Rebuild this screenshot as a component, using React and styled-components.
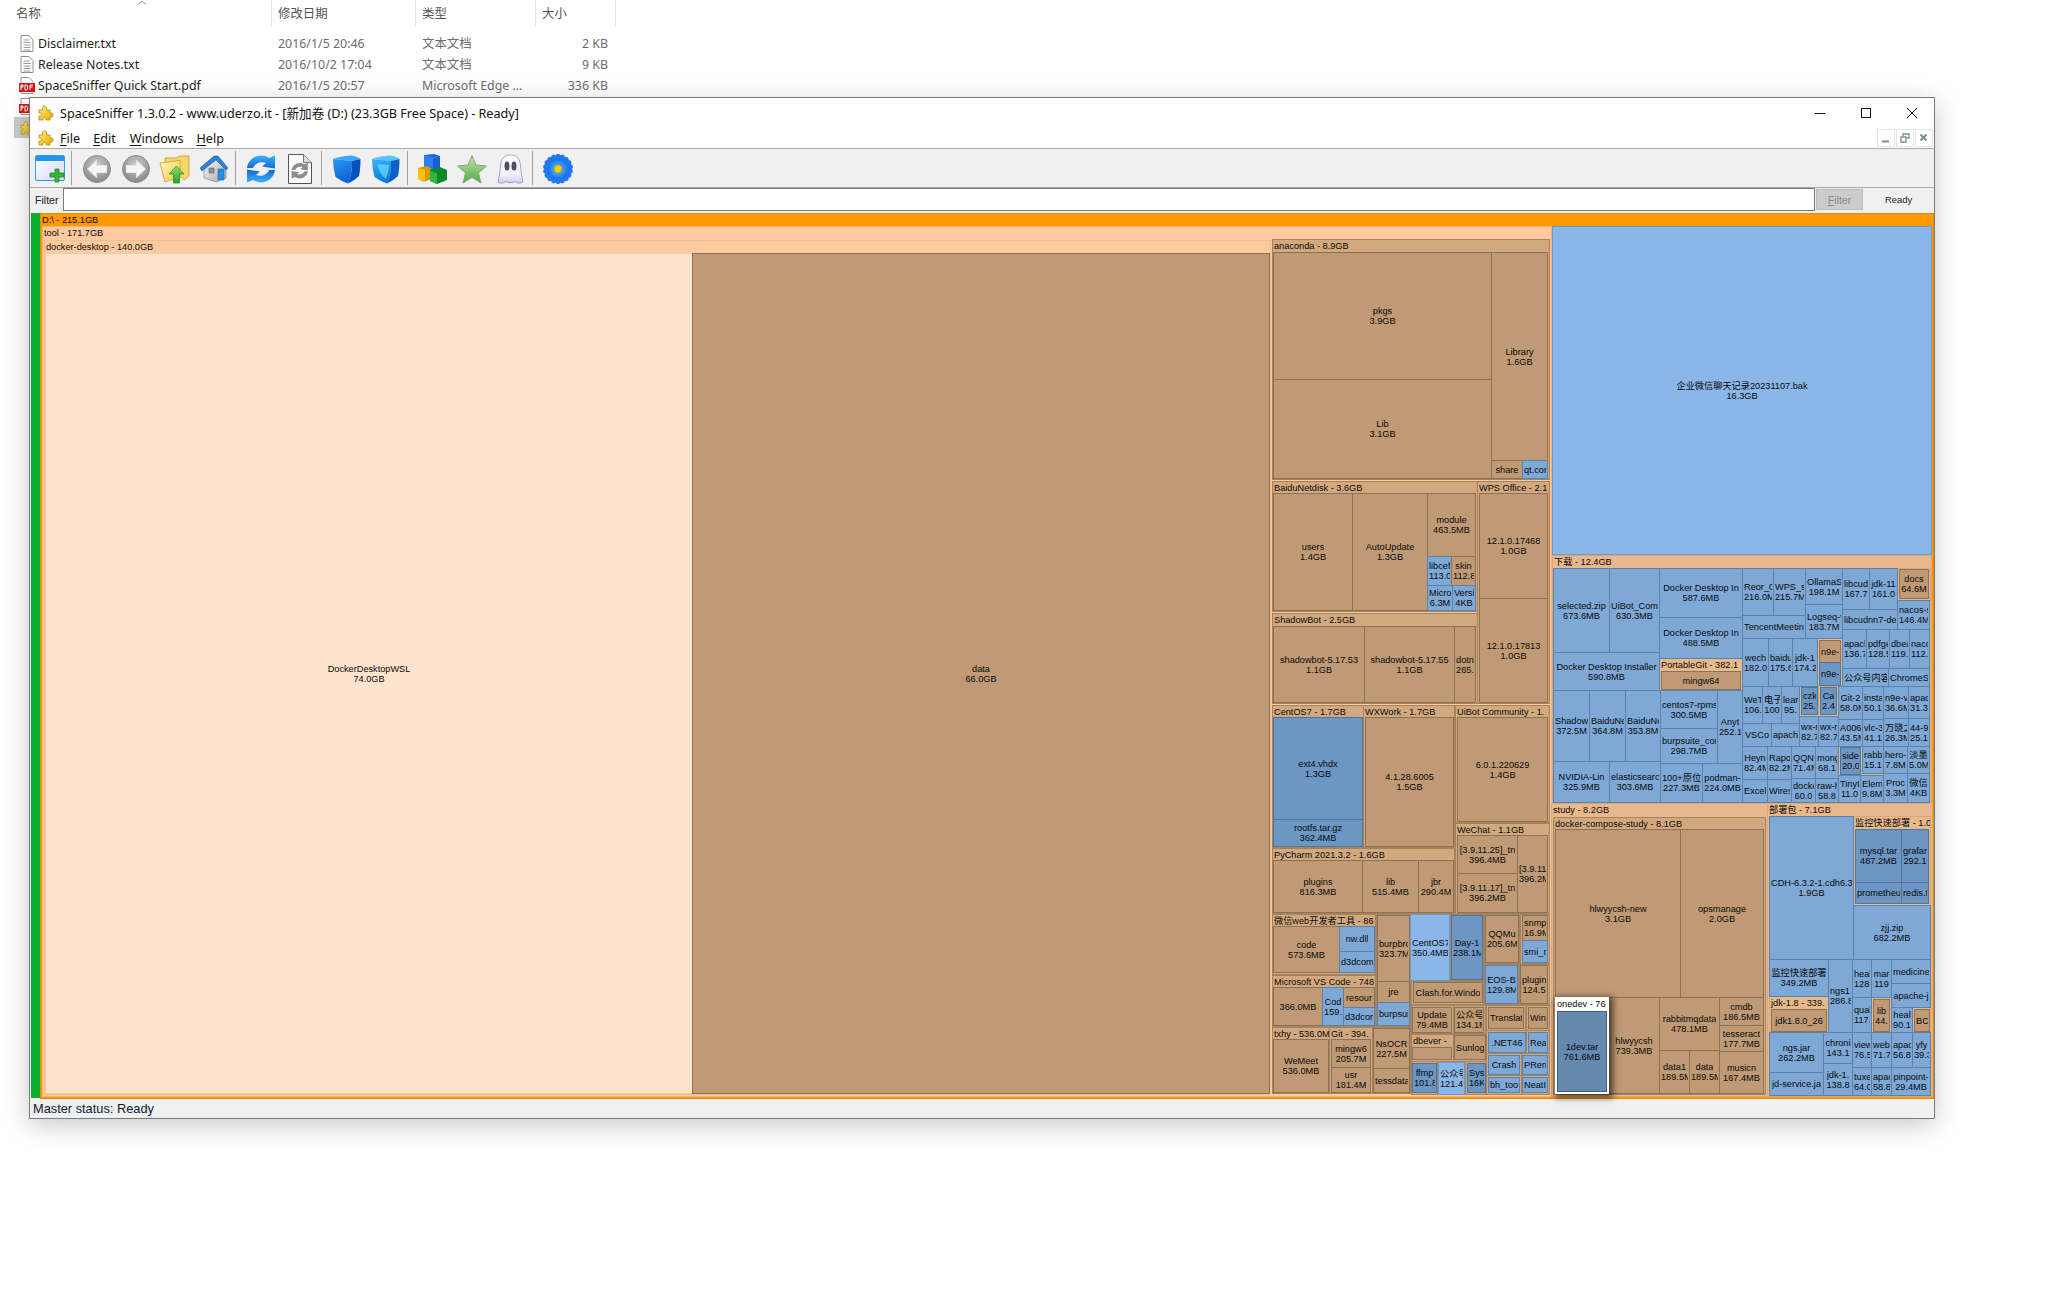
import React from 'react';
import styled, { createGlobalStyle } from 'styled-components';

const GlobalStyle = createGlobalStyle`
  html, body {
    margin: 0;
    background: #fff;
    font-family: "Liberation Sans", "Noto Sans CJK SC", sans-serif;
  }
  #root {
    position: relative;
    width: 2070px;
    height: 1292px;
    overflow: hidden;
  }
`;

const UI_FONT = `"Noto Sans", "Noto Sans CJK SC", sans-serif`;

/* ---------- explorer behind the window ---------- */

const Explorer = styled.div`
  font-family: ${UI_FONT};
  font-size: 12.4px;
`;

const ColumnHeader = styled.div`
  position: relative;
  display: grid;
  grid-template-columns: 272px 144px 120px 80px;
  width: 616px;
  height: 27px;
  color: #555;
`;

const HeaderCell = styled.div`
  padding-left: ${p => p.$pad}px;
  line-height: 27px;
  border-right: 1px solid #e5e5e5;
`;

const SortMark = styled.svg`
  position: absolute;
  left: 137px;
  top: 0;
`;

const FileList = styled.div`
  margin-top: 6px;
`;

const FileRow = styled.div`
  display: grid;
  grid-template-columns: 258px 144px 120px 80px;
  width: 602px;
  height: 21px;
  margin-left: 14px;
  line-height: 21px;
  color: #6d6d6d;
  background: ${p => (p.$selected ? '#cccccc' : 'transparent')};
`;

const FileName = styled.div`
  display: flex;
  align-items: center;
  gap: 4px;
  padding-left: 6px;
  color: #1e1e1e;
`;

const FileIcon = styled.span`
  display: flex;
  justify-content: center;
  width: 14px;
`;

const FileCol = styled.div`
  padding-left: 6px;
`;

const FileSize = styled.div`
  padding-right: 8px;
  text-align: right;
`;

/* ---------- SpaceSniffer window ---------- */

const Window = styled.div`
  position: absolute;
  left: 29px;
  top: 97px;
  width: 1906px;
  height: 1022px;
  box-sizing: border-box;
  display: flex;
  flex-direction: column;
  background: #f0f0f0;
  border: 1px solid #7a7a7a;
  box-shadow: 0 6px 24px rgba(0, 0, 0, 0.22);
`;

const TitleBar = styled.div`
  display: flex;
  align-items: center;
  height: 30px;
  padding-left: 8px;
  background: #fff;
  font-family: ${UI_FONT};
  font-size: 12.6px;
  color: #111;
`;

const TitleText = styled.span`
  margin: -2px 0 0 6px;
  flex: 1;
`;

const CaptionButton = styled.div`
  display: flex;
  align-items: center;
  justify-content: center;
  width: 46px;
  height: 30px;
  svg {
    margin-left: 2px;
  }
`;

const MenuBar = styled.div`
  display: flex;
  align-items: center;
  height: 20px;
  padding-left: 8px;
  background: #fff;
  border-bottom: 1px solid #a9a9a9;
  font-family: ${UI_FONT};
  font-size: 12.6px;
  color: #111;
`;

const MenuItem = styled.span`
  margin-left: ${p => p.$left}px;
  u {
    text-underline-offset: 2px;
  }
`;

const MdiButtons = styled.div`
  display: flex;
  gap: 1px;
  margin-left: auto;
  margin-right: 1px;
`;

const MdiButton = styled.div`
  display: flex;
  align-items: center;
  justify-content: center;
  width: 18px;
  height: 18px;
  box-sizing: border-box;
  border: 1px solid #e6e6e6;
  background: #fff;
`;

const Toolbar = styled.div`
  display: flex;
  align-items: center;
  height: 38px;
  box-sizing: content-box;
  flex: none;
  border-bottom: 1px solid #a9a9a9;
`;

const ToolButton = styled.div`
  display: flex;
  align-items: center;
  justify-content: center;
  width: 39px;
  height: 34px;
  padding-top: 2px;
`;

const ToolSep = styled.div`
  width: 1px;
  height: 34px;
  margin: 0 5px 0 2px;
  background: #a3a3a3;
`;

const FilterRow = styled.div`
  display: flex;
  align-items: center;
  height: 25px;
  box-sizing: border-box;
  padding-bottom: 2px;
  flex: none;
  font-size: 10.6px;
  color: #222;
`;

const FilterLabel = styled.label`
  width: 33px;
  padding-left: 5px;
  box-sizing: border-box;
`;

const FilterInput = styled.input`
  width: 1752px;
  height: 23px;
  box-sizing: border-box;
  border: 1px solid #7a7a7a;
  background: #fff;
  outline: none;
`;

const FilterButton = styled.button`
  width: 47px;
  height: 21px;
  margin-left: 1px;
  padding: 0;
  border: 1px solid #bcbcbc;
  background: #cccccc;
  color: #8a8a8a;
  font: inherit;
`;

const ReadyText = styled.span`
  margin-left: 22px;
  font-size: 9.4px;
`;

const MapArea = styled.div`
  display: flex;
  flex: 1;
  min-height: 0;
`;

const GreenBar = styled.div`
  width: 9px;
  margin-left: 1px;
  background: #08ae2d;
`;

const Treemap = styled.div`
  position: relative;
  width: 1894px;
  height: 100%;
  font-size: 9.2px;
  line-height: 10px;
  color: #0a0a0a;
`;

const palette = {
  root: ['#ff9900', '#e88b00'],
  tool: ['#fdc99f', '#f2b27c'],
  docker: ['#fdca9f', '#f3c096'],
  wsl: ['#fee3cc', '#f2cba6'],
  side: ['#e8b98c', '#d7a679'],
  group: ['#d2a97e', '#a5835f'],
  folder: ['#bf9a74', '#8c7254'],
  blue: ['#7ea8d6', '#5c82aa'],
  dark: ['#6c96c4', '#4f749c'],
  bright: ['#8ab6e8', '#6f99c6'],
  pick: ['#ffffff', '#ffffff'],
  slate: ['#6689b0', '#3f5f82'],
};

const Cell = styled.div`
  position: absolute;
  box-sizing: border-box;
  overflow: hidden;
  background: ${p => palette[p.$kind][0]};
  border: 1px solid ${p => palette[p.$kind][1]};
  ${p => p.$kind === 'pick' && 'box-shadow: 2px 2px 6px 2px rgba(0,0,0,.6); overflow: visible; z-index: 2;'}
`;

const Leaf = styled(Cell)`
  display: flex;
  flex-direction: column;
  justify-content: center;
  align-items: center;
  padding: 0 1px;
`;

const LeafLine = styled.span`
  display: block;
  flex: none;
  max-width: 100%;
  overflow: hidden;
  white-space: nowrap;
`;

const GroupTitle = styled.div`
  height: 12px;
  padding-left: 1px;
  overflow: hidden;
  line-height: 12px;
  white-space: nowrap;
`;

const StatusBar = styled.div`
  height: 20px;
  padding-left: 3px;
  flex: none;
  line-height: 22px;
  font-size: 12.8px;
  color: #0b1a33;
`;

/* ---------- treemap data, page pixel coordinates ---------- */

const ORIGIN_X = 40;
const ORIGIN_Y = 213;

// [x0, y0, x1, y1, kind, title]
const groups = [
  [40, 213, 1933, 1098, 'root', 'D:\\ - 215.1GB'],
  [42, 226, 1551, 1096, 'tool', 'tool - 171.7GB'],
  [44, 240, 1270, 1094, 'docker', 'docker-desktop - 140.0GB'],
  [1272, 239, 1549, 479, 'group', 'anaconda - 8.9GB'],
  [1272, 481, 1477, 611, 'group', 'BaiduNetdisk - 3.6GB'],
  [1477, 481, 1549, 703, 'group', 'WPS Office - 2.1'],
  [1272, 613, 1477, 703, 'group', 'ShadowBot - 2.5GB'],
  [1272, 705, 1363, 847, 'group', 'CentOS7 - 1.7GB'],
  [1363, 705, 1454, 847, 'group', 'WXWork - 1.7GB'],
  [1455, 705, 1549, 822, 'group', 'UiBot Community - 1.'],
  [1455, 823, 1549, 913, 'group', 'WeChat - 1.1GB'],
  [1272, 848, 1454, 913, 'group', 'PyCharm 2021.3.2 - 1.6GB'],
  [1272, 914, 1375, 974, 'group', '微信web开发者工具 - 86'],
  [1272, 975, 1375, 1026, 'group', 'Microsoft VS Code - 748'],
  [1272, 1027, 1329, 1093, 'group', 'txhy - 536.0M'],
  [1329, 1027, 1372, 1093, 'group', 'Git - 394.'],
  [1376, 914, 1410, 1026, 'group', ''],
  [1372, 1027, 1410, 1093, 'group', ''],
  [1450, 914, 1483, 980, 'group', ''],
  [1484, 914, 1519, 963, 'group', ''],
  [1520, 914, 1549, 963, 'group', ''],
  [1484, 964, 1518, 1004, 'group', ''],
  [1519, 964, 1549, 1004, 'group', ''],
  [1411, 981, 1483, 1004, 'group', ''],
  [1411, 1005, 1453, 1033, 'group', ''],
  [1453, 1005, 1485, 1033, 'group', ''],
  [1411, 1034, 1453, 1061, 'group', 'dbever -'],
  [1453, 1034, 1485, 1061, 'group', ''],
  [1411, 1061, 1437, 1094, 'group', ''],
  [1465, 1061, 1486, 1094, 'group', ''],
  [1486, 1005, 1525, 1030, 'group', ''],
  [1526, 1005, 1549, 1030, 'group', ''],
  [1486, 1030, 1526, 1053, 'group', ''],
  [1526, 1030, 1549, 1053, 'group', ''],
  [1486, 1053, 1521, 1075, 'group', ''],
  [1521, 1053, 1549, 1075, 'group', ''],
  [1486, 1075, 1521, 1094, 'group', ''],
  [1521, 1075, 1549, 1094, 'group', ''],
  [1552, 555, 1931, 802, 'side', '下载 - 12.4GB'],
  [1659, 658, 1742, 690, 'side', 'PortableGit - 382.1'],
  [1897, 568, 1930, 600, 'side', ''],
  [1817, 638, 1842, 687, 'side', ''],
  [1799, 686, 1818, 716, 'side', ''],
  [1818, 686, 1838, 716, 'side', ''],
  [1838, 746, 1862, 775, 'side', ''],
  [1551, 803, 1767, 1096, 'side', 'study - 8.2GB'],
  [1553, 817, 1765, 1094, 'group', 'docker-compose-study - 8.1GB'],
  [1767, 803, 1932, 1096, 'side', '部署包 - 7.1GB'],
  [1853, 816, 1930, 905, 'side', '监控快速部署 - 1.0'],
  [1769, 996, 1828, 1032, 'side', 'jdk-1.8 - 339.'],
  [1871, 997, 1891, 1032, 'side', ''],
  [1912, 1007, 1930, 1032, 'side', ''],
];

// [x0, y0, x1, y1, kind, name, size], text as far as the cell shows it
const leaves = [
  [45, 253, 692, 1093, 'wsl', 'DockerDesktopWSL', '74.0GB'],
  [692, 253, 1269, 1093, 'folder', 'data', '66.0GB'],
  [1552, 226, 1931, 554, 'bright', '企业微信聊天记录20231107.bak', '16.3GB'],

  [1273, 252, 1491, 379, 'folder', 'pkgs', '3.9GB'],
  [1273, 379, 1491, 478, 'folder', 'Lib', '3.1GB'],
  [1491, 252, 1547, 460, 'folder', 'Library', '1.6GB'],
  [1491, 460, 1522, 478, 'folder', 'share'],
  [1522, 460, 1547, 478, 'blue', 'qt.cor'],

  [1273, 493, 1352, 610, 'folder', 'users', '1.4GB'],
  [1352, 493, 1427, 610, 'folder', 'AutoUpdate', '1.3GB'],
  [1427, 493, 1475, 556, 'folder', 'module', '463.5MB'],
  [1427, 556, 1451, 585, 'blue', 'libcef', '113.0'],
  [1451, 556, 1475, 585, 'folder', 'skin', '112.8'],
  [1427, 585, 1452, 610, 'blue', 'Micro', '6.3M'],
  [1452, 585, 1475, 610, 'blue', 'Versi', '4KB'],

  [1479, 493, 1547, 598, 'folder', '12.1.0.17468', '1.0GB'],
  [1479, 598, 1547, 702, 'folder', '12.1.0.17813', '1.0GB'],

  [1273, 626, 1364, 702, 'folder', 'shadowbot-5.17.53', '1.1GB'],
  [1364, 626, 1454, 702, 'folder', 'shadowbot-5.17.55', '1.1GB'],
  [1454, 626, 1475, 702, 'folder', 'dotn', '265.'],

  [1273, 717, 1362, 819, 'dark', 'ext4.vhdx', '1.3GB'],
  [1273, 819, 1362, 846, 'dark', 'rootfs.tar.gz', '362.4MB'],
  [1365, 717, 1453, 846, 'folder', '4.1.28.6005', '1.5GB'],
  [1457, 717, 1547, 821, 'folder', '6.0.1.220629', '1.4GB'],
  [1457, 835, 1517, 873, 'folder', '[3.9.11.25]_tn', '396.4MB'],
  [1457, 873, 1517, 912, 'folder', '[3.9.11.17]_tn', '396.2MB'],
  [1517, 835, 1547, 912, 'folder', '[3.9.11', '396.2M'],
  [1273, 860, 1362, 912, 'folder', 'plugins', '816.3MB'],
  [1362, 860, 1418, 912, 'folder', 'lib', '515.4MB'],
  [1418, 860, 1453, 912, 'folder', 'jbr', '290.4M'],

  [1273, 926, 1339, 972, 'folder', 'code', '573.6MB'],
  [1339, 926, 1374, 951, 'blue', 'nw.dll'],
  [1339, 951, 1374, 972, 'blue', 'd3dcom'],
  [1377, 915, 1409, 981, 'folder', 'burpbro', '323.7M'],
  [1377, 981, 1409, 1002, 'folder', 'jre'],
  [1377, 1002, 1409, 1025, 'blue', 'burpsui'],
  [1410, 914, 1449, 980, 'bright', 'CentOS7', '350.4MB'],
  [1451, 915, 1482, 979, 'dark', 'Day-1', '238.1M'],
  [1485, 915, 1518, 962, 'folder', 'QQMu', '205.6M'],
  [1522, 915, 1547, 940, 'folder', 'snmp', '16.9M'],
  [1522, 940, 1547, 962, 'blue', 'smi_n'],
  [1485, 965, 1517, 1003, 'blue', 'EOS-B', '129.8M'],
  [1520, 965, 1547, 1003, 'folder', 'plugin', '124.5'],
  [1413, 982, 1482, 1002, 'folder', 'Clash.for.Windo'],

  [1273, 987, 1322, 1025, 'folder', '', '366.0MB'],
  [1322, 987, 1343, 1025, 'blue', 'Cod', '159.'],
  [1343, 987, 1374, 1007, 'folder', 'resour'],
  [1343, 1007, 1374, 1025, 'blue', 'd3dcor'],
  [1273, 1039, 1328, 1092, 'folder', 'WeMeet', '536.0MB'],
  [1331, 1039, 1370, 1067, 'folder', 'mingw6', '205.7M'],
  [1331, 1067, 1370, 1092, 'folder', 'usr', '181.4M'],
  [1373, 1028, 1409, 1068, 'folder', 'NsOCR', '227.5M'],
  [1373, 1068, 1409, 1092, 'folder', 'tessdata'],
  [1412, 1007, 1451, 1032, 'folder', 'Update', '79.4MB'],
  [1454, 1007, 1483, 1032, 'folder', '公众号', '134.1M'],
  [1412, 1047, 1451, 1059, 'folder'],
  [1454, 1035, 1485, 1059, 'folder', 'Sunlog'],
  [1412, 1063, 1436, 1092, 'dark', 'ffmp', '101.8'],
  [1438, 1062, 1464, 1094, 'bright', '公众号', '121.4'],
  [1467, 1063, 1485, 1092, 'dark', 'Sys', '16K'],
  [1488, 1007, 1523, 1028, 'folder', 'Translat'],
  [1528, 1007, 1547, 1028, 'folder', 'Win'],
  [1488, 1032, 1525, 1052, 'blue', '.NET46'],
  [1528, 1032, 1547, 1052, 'blue', 'Rea'],
  [1488, 1055, 1519, 1074, 'blue', 'Crash'],
  [1522, 1055, 1547, 1074, 'blue', 'PRen'],
  [1488, 1077, 1519, 1092, 'blue', 'bh_too'],
  [1522, 1077, 1547, 1092, 'blue', 'NeatI'],

  [1553, 568, 1609, 652, 'blue', 'selected.zip', '673.6MB'],
  [1609, 568, 1659, 652, 'blue', 'UiBot_Com', '630.3MB'],
  [1659, 568, 1742, 617, 'blue', 'Docker Desktop In', '587.6MB'],
  [1659, 617, 1742, 658, 'blue', 'Docker Desktop In', '488.5MB'],
  [1553, 652, 1659, 690, 'blue', 'Docker Desktop Installer', '590.8MB'],
  [1661, 671, 1740, 689, 'folder', 'mingw64'],
  [1742, 568, 1773, 615, 'blue', 'Reor_0', '216.0M'],
  [1773, 568, 1805, 615, 'blue', 'WPS_s', '215.7M'],
  [1742, 615, 1805, 638, 'blue', 'TencentMeetin'],
  [1805, 568, 1842, 604, 'blue', 'OllamaS', '198.1M'],
  [1805, 604, 1842, 638, 'blue', 'Logseq-v', '183.7M'],
  [1842, 568, 1869, 609, 'blue', 'libcudi', '167.7'],
  [1869, 568, 1897, 609, 'blue', 'jdk-11', '161.0'],
  [1899, 569, 1928, 598, 'folder', 'docs', '64.6M'],
  [1842, 609, 1897, 629, 'blue', 'libcudnn7-de'],
  [1897, 600, 1929, 629, 'blue', 'nacos-s', '146.4M'],
  [1742, 638, 1768, 686, 'blue', 'wech', '182.0'],
  [1768, 638, 1792, 686, 'blue', 'baidu', '175.6'],
  [1792, 638, 1817, 686, 'blue', 'jdk-1', '174.2'],
  [1819, 640, 1840, 662, 'folder', 'n9e-'],
  [1819, 662, 1840, 685, 'dark', 'n9e-'],
  [1842, 629, 1866, 668, 'blue', 'apacl', '136.7'],
  [1866, 629, 1889, 668, 'blue', 'pdfge', '128.5'],
  [1889, 629, 1909, 668, 'blue', 'dbea', '119.'],
  [1909, 629, 1929, 668, 'blue', 'nacc', '112.'],
  [1842, 668, 1888, 687, 'blue', '公众号内容'],
  [1888, 668, 1929, 687, 'blue', 'ChromeS'],

  [1553, 690, 1589, 761, 'blue', 'Shadow', '372.5M'],
  [1589, 690, 1625, 761, 'blue', 'BaiduNe', '364.8M'],
  [1625, 690, 1660, 761, 'blue', 'BaiduNe', '353.8M'],
  [1660, 690, 1717, 728, 'blue', 'centos7-rpms', '300.5MB'],
  [1660, 728, 1717, 763, 'blue', 'burpsuite_cor', '298.7MB'],
  [1717, 690, 1742, 763, 'blue', 'Anyt', '252.1'],
  [1553, 761, 1609, 802, 'blue', 'NVIDIA-Lin', '325.9MB'],
  [1609, 761, 1660, 802, 'blue', 'elasticsearch', '303.6MB'],
  [1660, 763, 1702, 802, 'blue', '100+原位', '227.3MB'],
  [1702, 763, 1742, 802, 'blue', 'podman-', '224.0MB'],
  [1742, 686, 1762, 723, 'blue', 'WeT', '106.'],
  [1762, 686, 1781, 723, 'blue', '电子', '100'],
  [1781, 686, 1799, 723, 'blue', 'lear', '95.'],
  [1801, 687, 1817, 714, 'dark', 'czk', '25.'],
  [1820, 687, 1836, 714, 'dark', 'Ca', '2.4'],
  [1838, 686, 1862, 719, 'blue', 'Git-2', '58.0M'],
  [1862, 686, 1883, 719, 'blue', 'insta', '50.1'],
  [1883, 686, 1908, 718, 'blue', 'n9e-v', '36.6M'],
  [1908, 686, 1929, 718, 'blue', 'apac', '31.3'],
  [1742, 723, 1771, 746, 'blue', 'VSCo'],
  [1771, 723, 1799, 746, 'blue', 'apach'],
  [1799, 716, 1818, 746, 'blue', 'wx-r', '82.7'],
  [1818, 716, 1838, 746, 'blue', 'wx-r', '82.7'],
  [1838, 719, 1862, 746, 'blue', 'A006', '43.5M'],
  [1862, 719, 1883, 746, 'blue', 'vlc-3', '41.1'],
  [1883, 718, 1908, 746, 'blue', '万晓之', '26.3M'],
  [1908, 718, 1929, 746, 'blue', '44-9', '25.1'],
  [1742, 746, 1767, 779, 'blue', 'Heyn', '82.4M'],
  [1767, 746, 1791, 779, 'blue', 'Rapo', '82.2M'],
  [1791, 746, 1815, 778, 'blue', 'QQN', '71.4M'],
  [1815, 746, 1838, 778, 'blue', 'mong', '68.1'],
  [1840, 747, 1860, 774, 'dark', 'side', '20.0'],
  [1862, 746, 1883, 773, 'blue', 'rabbi', '15.1'],
  [1883, 746, 1907, 773, 'blue', 'hero-', '7.8M'],
  [1907, 746, 1929, 773, 'blue', '淡墨', '5.0M'],
  [1742, 779, 1767, 802, 'blue', 'Excel'],
  [1767, 779, 1791, 802, 'blue', 'Wires'],
  [1791, 778, 1815, 802, 'blue', 'docke', '60.0'],
  [1815, 778, 1838, 802, 'blue', 'raw-h', '58.8'],
  [1838, 775, 1860, 802, 'blue', 'TinyI', '11.0'],
  [1860, 775, 1883, 802, 'blue', 'Elem', '9.8M'],
  [1883, 773, 1907, 802, 'blue', 'Proc', '3.3M'],
  [1907, 773, 1929, 802, 'blue', '微信', '4KB'],

  [1555, 829, 1680, 997, 'folder', 'hlwyycsh-new', '3.1GB'],
  [1680, 829, 1763, 997, 'folder', 'opsmanage', '2.0GB'],
  [1608, 997, 1659, 1093, 'folder', 'hlwyycsh', '739.3MB'],
  [1659, 997, 1719, 1050, 'folder', 'rabbitmqdata', '478.1MB'],
  [1659, 1050, 1689, 1093, 'folder', 'data1', '189.5M'],
  [1689, 1050, 1719, 1093, 'folder', 'data', '189.5M'],
  [1719, 997, 1763, 1025, 'folder', 'cmdb', '186.5MB'],
  [1719, 1025, 1763, 1051, 'folder', 'tesseract', '177.7MB'],
  [1719, 1051, 1763, 1093, 'folder', 'musicn', '167.4MB'],

  [1769, 816, 1853, 959, 'blue', 'CDH-6.3.2-1.cdh6.3', '1.9GB'],
  [1855, 829, 1901, 882, 'dark', 'mysql.tar', '487.2MB'],
  [1901, 829, 1928, 882, 'dark', 'grafar', '292.1'],
  [1855, 882, 1901, 903, 'dark', 'prometheu'],
  [1901, 882, 1928, 903, 'dark', 'redis.t'],
  [1853, 905, 1930, 959, 'blue', 'zjj.zip', '682.2MB'],
  [1769, 959, 1828, 996, 'blue', '监控快速部署', '349.2MB'],
  [1771, 1009, 1826, 1031, 'folder', 'jdk1.8.0_26'],
  [1828, 959, 1852, 1032, 'blue', 'ngs1.', '286.8'],
  [1852, 959, 1871, 997, 'blue', 'heal', '128.'],
  [1871, 959, 1891, 997, 'blue', 'mar', '119'],
  [1891, 959, 1930, 983, 'blue', 'medicine'],
  [1891, 983, 1930, 1007, 'blue', 'apache-j'],
  [1852, 997, 1871, 1032, 'blue', 'qual', '117.'],
  [1873, 999, 1889, 1031, 'folder', 'lib', '44.'],
  [1891, 1007, 1912, 1032, 'blue', 'heal', '90.1'],
  [1914, 1009, 1929, 1031, 'folder', 'BC'],
  [1769, 1032, 1823, 1072, 'blue', 'ngs.jar', '262.2MB'],
  [1769, 1072, 1823, 1095, 'blue', 'jd-service.ja'],
  [1823, 1032, 1852, 1063, 'blue', 'chroni', '143.1'],
  [1823, 1063, 1852, 1095, 'blue', 'jdk-1.', '138.8'],
  [1852, 1032, 1871, 1067, 'blue', 'view', '76.5'],
  [1871, 1032, 1891, 1067, 'blue', 'web', '71.7'],
  [1891, 1032, 1912, 1067, 'blue', 'apac', '56.8'],
  [1912, 1032, 1930, 1067, 'blue', 'yfy', '39.3'],
  [1852, 1067, 1871, 1095, 'blue', 'tuxe', '64.0'],
  [1871, 1067, 1891, 1095, 'blue', 'apac', '58.8'],
  [1891, 1067, 1930, 1095, 'blue', 'pinpoint-', '29.4MB'],
];

const place = (x0, y0, x1, y1) => ({
  left: x0 - ORIGIN_X,
  top: y0 - ORIGIN_Y,
  width: x1 - x0 + 1,
  height: y1 - y0 + 1,
});

/* ---------- icons ---------- */

const Puzzle = ({ size = 16 }) => (
  <svg width={size} height={size} viewBox="0 0 16 16">
    <defs>
      <linearGradient id="pz" x1="0" y1="0" x2="1" y2="1">
        <stop offset="0" stopColor="#fff27a" />
        <stop offset="1" stopColor="#e2a800" />
      </linearGradient>
    </defs>
    <path
      d="M1 5h3.500C4 2 5 1 6.500 1S9 2 8.500 5H12v3c2-.5 3 .5 3 2s-1 2.500-3 2v3H8c.5-1.500-.5-2.500-1.500-2.500S4.500 13.500 5 15H1v-4c1.500.5 2.500-.5 2.500-1.500S2.500 7.500 1 8z"
      fill="url(#pz)"
      stroke="#b58a10"
      strokeWidth=".8"
    />
  </svg>
);

const DocIcon = () => (
  <svg width="14" height="17" viewBox="0 0 14 17">
    <path d="M1 .5h8l4 4v12H1z" fill="#fff" stroke="#8f8f8f" />
    <path d="M3.500 5h6M3.500 7.500h7M3.500 10h7M3.500 12.500h7M3.500 15h7" stroke="#9a9a9a" />
  </svg>
);

const PdfIcon = () => (
  <svg width="16" height="17" viewBox="0 0 16 17" style={{ flex: 'none' }}>
    <path d="M2 .5h8l4 4v12H2z" fill="#fff" stroke="#9a9a9a" />
    <rect x="0" y="6" width="16" height="9" fill="#d01a1a" />
    <path d="M2 8v5M2 8h2v2H2M6 8v5h1.500l1-1v-3l-1-1zM11 13V8h3M11 10h2.500" fill="none" stroke="#fff" strokeWidth="1" />
  </svg>
);

const NewWindowIcon = () => (
  <svg width="30" height="28" viewBox="0 0 30 28">
    <defs>
      <linearGradient id="nw" x1="0" y1="0" x2="1" y2="1">
        <stop offset="0" stopColor="#fff" />
        <stop offset="1" stopColor="#d5d5fb" />
      </linearGradient>
    </defs>
    <rect x=".5" y=".5" width="29" height="25" rx="1.500" fill="url(#nw)" stroke="#2c9df5" />
    <rect x="1" y="1" width="28" height="5" fill="#1f96f2" />
    <path d="M20 14h4v4h5v4h-5v5h-4v-5h-5v-4h5z" fill="#34b53a" stroke="#1c8a26" strokeWidth=".8" />
  </svg>
);

const NavIcon = ({ flip }) => (
  <svg width="28" height="28" viewBox="0 0 28 28">
    <defs>
      <radialGradient id="nav" cx=".5" cy=".35" r=".75">
        <stop offset="0" stopColor="#cfcfcf" />
        <stop offset="1" stopColor="#7b7b7b" />
      </radialGradient>
    </defs>
    <circle cx="14" cy="14" r="13.500" fill="url(#nav)" stroke="#8d8d8d" />
    <path
      d="M4.500 14 13.500 5.500V10.500H23.500V17.500H13.500V22.500Z"
      fill="#f6f6f6"
      stroke="#e8e8e8"
      strokeLinejoin="round"
      transform={flip ? 'matrix(-1 0 0 1 28 0)' : undefined}
    />
  </svg>
);

const FolderUpIcon = () => (
  <svg width="31" height="29" viewBox="0 0 31 29">
    <defs>
      <linearGradient id="fu" x1="0" y1="0" x2="1" y2="1">
        <stop offset="0" stopColor="#fff8b8" />
        <stop offset="1" stopColor="#f2c94b" />
      </linearGradient>
      <linearGradient id="fa" x1="0" y1="0" x2="0" y2="1">
        <stop offset="0" stopColor="#8fe06a" />
        <stop offset="1" stopColor="#1fa62b" />
      </linearGradient>
    </defs>
    <path d="M6 7V3h12l2-2h10v20l-5 4z" fill="#f5d66a" stroke="#c39b2a" strokeWidth=".8" />
    <path d="M1 8 21 5.500V22L6 27Z" fill="url(#fu)" stroke="#c9a028" strokeWidth=".8" />
    <path d="M17.500 11 25 19h-4.500v9h-6v-9H10Z" fill="url(#fa)" stroke="#2b8f2f" strokeWidth=".8" />
  </svg>
);

const HomeIcon = () => (
  <svg width="30" height="28" viewBox="0 0 30 28">
    <defs>
      <linearGradient id="hw" x1="0" y1="0" x2="1" y2="1">
        <stop offset="0" stopColor="#fafafa" />
        <stop offset="1" stopColor="#a7a7a7" />
      </linearGradient>
    </defs>
    <path d="M5 12v11l12 4 10-4V12L16 3Z" fill="url(#hw)" stroke="#8a8a8a" strokeWidth=".7" />
    <path d="M1 13 15 1h4l10 12-2 2-10-10L3 16Z" fill="#2f7fd6" stroke="#1b5fb0" strokeWidth=".6" />
    <rect x="10" y="13" width="5" height="5" fill="#8e8e8e" stroke="#6a6a6a" strokeWidth=".6" />
    <rect x="19" y="14" width="6" height="11" fill="#2b8ce0" stroke="#1c6bb8" strokeWidth=".6" />
  </svg>
);

const arrowTop = 'M1 14C2 4 14 -2 23 4L29 1.500V14.500L16 12.500L20 9C15 7 9 9 7 14Z';

const RefreshIcon = () => (
  <svg width="30" height="30" viewBox="0 0 30 30">
    <defs>
      <linearGradient id="rf" x1="0" y1="0" x2="0" y2="1">
        <stop offset="0" stopColor="#3bb2f7" />
        <stop offset="1" stopColor="#1767d8" />
      </linearGradient>
    </defs>
    <path d={arrowTop} fill="url(#rf)" />
    <path d={arrowTop} fill="url(#rf)" transform="rotate(180 15 15)" />
  </svg>
);

const DocRefreshIcon = () => (
  <svg width="24" height="30" viewBox="0 0 24 30">
    <path d="M.5.500h15l8 8v21H.5z" fill="#fbfbfb" stroke="#555" />
    <path d="M15.500.500v8h8" fill="#ddd" stroke="#777" />
    <g transform="translate(3 8) scale(.58)" fill="#8d8d8d">
      <path d={arrowTop} />
      <path d={arrowTop} transform="rotate(180 15 15)" />
    </g>
  </svg>
);

const CubeIcon = ({ id, light }) => (
  <svg width="29" height="29" viewBox="0 0 29 29">
    <defs>
      <linearGradient id={id} x1="0" y1="0" x2=".3" y2="1">
        <stop offset="0" stopColor={light ? '#35b8f8' : '#2a97f5'} />
        <stop offset="1" stopColor={light ? '#0a78dc' : '#0a64d8'} />
      </linearGradient>
    </defs>
    <path d="M1 4Q8 1 19 .5 25 1 28.500 4L20 6Z" fill={light ? '#56c4fa' : '#3ea6f8'} />
    <path d="M1 4 20 6Q20.500 18 16 28.500 9 26 3.500 22 1 12 1 4Z" fill={`url(#${id})`} />
    <path d="M20 6 28.500 4Q28.500 14 27 21 22 26 16 28.500 20.500 18 20 6Z" fill={light ? '#0a62c6' : '#0750bb'} />
    {light && <path d="M6 9 18 10Q18 17 15 24 9 20 6 9Z" fill="#73e2fb" opacity=".65" />}
  </svg>
);

const BlocksIcon = () => (
  <svg width="31" height="30" viewBox="0 0 31 30">
    <path d="M7 1 17 0l6 2v12l-9 3-7-3z" fill="#1a5fd0" />
    <path d="M7 1l9 2 7-1-7 3v12l-9-3z" fill="#2c7df0" />
    <path d="M1 14l8-2 5 2v11l-7 3-6-3z" fill="#d29a00" />
    <path d="M1 14l7 2v12l-7-3z" fill="#ffc400" />
    <path d="M13 16l10-3 7 3v10l-10 4-7-3z" fill="#0d8a24" />
    <path d="M13 17l7 2v11l-7-3z" fill="#2fb83e" />
  </svg>
);

const StarIcon = () => (
  <svg width="32" height="30" viewBox="0 0 32 30">
    <defs>
      <linearGradient id="st" x1="0" y1="0" x2="0" y2="1">
        <stop offset="0" stopColor="#bfe6ad" />
        <stop offset="1" stopColor="#55aa4a" />
      </linearGradient>
    </defs>
    <path
      d="M16 1.500 20 11l10.500 1-8 7 2.500 10L16 23.500 7 29l2.500-10-8-7L12 11Z"
      fill="url(#st)"
      stroke="#84ad78"
      strokeLinejoin="round"
    />
  </svg>
);

const GhostIcon = () => (
  <svg width="29" height="30" viewBox="0 0 29 30">
    <defs>
      <linearGradient id="gh" x1="0" y1="0" x2="0" y2="1">
        <stop offset="0" stopColor="#fff" />
        <stop offset=".7" stopColor="#f2f1fc" />
        <stop offset="1" stopColor="#cdcbf1" />
      </linearGradient>
    </defs>
    <path
      d="M2 28C4 20 4 14 5 9 6 3 10 1 14.500 1S23 3 24 9C25 14 25 20 27 28 24 30 21 29 19 27.500 17 29 12 29 10 27.500 8 29 5 30 2 28Z"
      fill="url(#gh)"
      stroke="#8e8bc0"
      strokeWidth=".8"
    />
    <ellipse cx="11" cy="12" rx="2.500" ry="4.500" fill="#4f4f63" />
    <ellipse cx="18" cy="12" rx="2.500" ry="4.500" fill="#4f4f63" />
  </svg>
);

const petals = Array.from({ length: 18 }, (_, i) => i * 20);

const FlowerIcon = () => (
  <svg width="30" height="30" viewBox="0 0 30 30">
    <defs>
      <radialGradient id="fl">
        <stop offset=".2" stopColor="#58aefb" />
        <stop offset="1" stopColor="#1670ea" />
      </radialGradient>
    </defs>
    {petals.map(a => (
      <ellipse key={a} cx="15" cy="5" rx="2.800" ry="5" fill="#1f7cf0" stroke="#1260d0" strokeWidth=".3" transform={`rotate(${a} 15 15)`} />
    ))}
    <circle cx="15" cy="15" r="10.500" fill="url(#fl)" />
    <circle cx="15" cy="15" r="3.800" fill="#f6d000" stroke="#d09a00" strokeWidth=".6" />
  </svg>
);

const CaptionIcon = ({ type }) => (
  <svg width="14" height="14" viewBox="0 0 14 14" fill="none" stroke="#111">
    {type === 'min' && <path d="M1.500 7.500h11" />}
    {type === 'max' && <rect x="2.500" y="2.500" width="9" height="9" />}
    {type === 'close' && <path d="M2 2l10 10M12 2 2 12" />}
  </svg>
);

const MdiIcon = ({ type }) => (
  <svg width="10" height="10" viewBox="0 0 10 10" fill="none" stroke="#7b8a99" strokeWidth="1.300">
    {type === 'min' && <path d="M1 8.500h7" strokeWidth="2" />}
    {type === 'restore' && <path d="M3 3V1h6v4H7M1 4h5v5H1z" />}
    {type === 'close' && <path d="M1.500 1.500l6 6M7.500 1.500l-6 6" strokeWidth="2" />}
  </svg>
);

/* ---------- page ---------- */

const fileRows = [
  { icon: <DocIcon />, name: 'Disclaimer.txt', date: '2016/1/5 20:46', type: '文本文档', size: '2 KB' },
  { icon: <DocIcon />, name: 'Release Notes.txt', date: '2016/10/2 17:04', type: '文本文档', size: '9 KB' },
  { icon: <PdfIcon />, name: 'SpaceSniffer Quick Start.pdf', date: '2016/1/5 20:57', type: 'Microsoft Edge ...', size: '336 KB' },
  { icon: <PdfIcon />, id: 'pdf2' },
  { icon: <Puzzle />, id: 'exe', selected: true },
];

const toolbarGroups = [
  [<NewWindowIcon />],
  [<NavIcon />, <NavIcon flip />, <FolderUpIcon />, <HomeIcon />],
  [<RefreshIcon />, <DocRefreshIcon />],
  [<CubeIcon id="cb1" />, <CubeIcon id="cb2" light />],
  [<BlocksIcon />, <StarIcon />, <GhostIcon />],
  [<FlowerIcon />],
];

const menuItems = [
  ['F', 'ile', 6],
  ['E', 'dit', 13],
  ['W', 'indows', 14],
  ['H', 'elp', 13],
];

const App = () => (
  <>
    <GlobalStyle />
    <Explorer>
      <ColumnHeader>
        <SortMark width="10" height="5" viewBox="0 0 10 5">
          <path d="M1 4.500 5 1l4 3.500" fill="none" stroke="#999" />
        </SortMark>
        <HeaderCell $pad={16}>名称</HeaderCell>
        <HeaderCell $pad={6}>修改日期</HeaderCell>
        <HeaderCell $pad={6}>类型</HeaderCell>
        <HeaderCell $pad={6}>大小</HeaderCell>
      </ColumnHeader>
      <FileList>
        {fileRows.map(row => (
          <FileRow key={row.id || row.name} $selected={row.selected}>
            <FileName>
              <FileIcon>{row.icon}</FileIcon>
              {row.name}
            </FileName>
            <FileCol>{row.date}</FileCol>
            <FileCol>{row.type}</FileCol>
            <FileSize>{row.size}</FileSize>
          </FileRow>
        ))}
      </FileList>
    </Explorer>

    <Window>
      <TitleBar>
        <Puzzle />
        <TitleText>SpaceSniffer 1.3.0.2 - www.uderzo.it - [新加卷 (D:) (23.3GB Free Space) - Ready]</TitleText>
        <CaptionButton><CaptionIcon type="min" /></CaptionButton>
        <CaptionButton><CaptionIcon type="max" /></CaptionButton>
        <CaptionButton><CaptionIcon type="close" /></CaptionButton>
      </TitleBar>
      <MenuBar>
        <Puzzle />
        {menuItems.map(([key, rest, left]) => (
          <MenuItem key={key} $left={left}><u>{key}</u>{rest}</MenuItem>
        ))}
        <MdiButtons>
          <MdiButton><MdiIcon type="min" /></MdiButton>
          <MdiButton><MdiIcon type="restore" /></MdiButton>
          <MdiButton><MdiIcon type="close" /></MdiButton>
        </MdiButtons>
      </MenuBar>
      <Toolbar>
        {toolbarGroups.map((group, g) => (
          <React.Fragment key={g}>
            {g > 0 && <ToolSep />}
            {group.map((icon, i) => <ToolButton key={i}>{icon}</ToolButton>)}
          </React.Fragment>
        ))}
      </Toolbar>
      <FilterRow>
        <FilterLabel>Filter</FilterLabel>
        <FilterInput />
        <FilterButton disabled><u>F</u>ilter</FilterButton>
        <ReadyText>Ready</ReadyText>
      </FilterRow>
      <MapArea>
        <GreenBar />
        <Treemap>
          {groups.map(([x0, y0, x1, y1, kind, title], i) => (
            <Cell key={`g${i}`} $kind={kind} style={place(x0, y0, x1, y1)}>
              <GroupTitle>{title}</GroupTitle>
            </Cell>
          ))}
          {leaves.map(([x0, y0, x1, y1, kind, name, size], i) => (
            <Leaf key={`l${i}`} $kind={kind} style={place(x0, y0, x1, y1)}>
              {name && <LeafLine>{name}</LeafLine>}
              {size && <LeafLine>{size}</LeafLine>}
            </Leaf>
          ))}
          <Cell $kind="pick" style={place(1555, 997, 1608, 1093)}>
            <GroupTitle>onedev - 76</GroupTitle>
            <Leaf $kind="slate" style={{ left: 1, top: 13, width: 50, height: 81 }}>
              <LeafLine>1dev.tar</LeafLine>
              <LeafLine>761.6MB</LeafLine>
            </Leaf>
          </Cell>
        </Treemap>
      </MapArea>
      <StatusBar>Master status: Ready</StatusBar>
    </Window>
  </>
);

export default App;
